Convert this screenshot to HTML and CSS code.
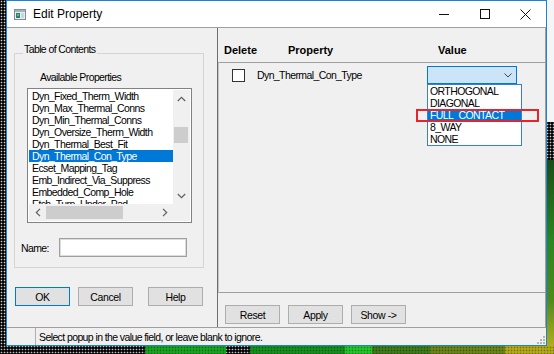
FILE: index.html
```html
<!DOCTYPE html>
<html lang="en">
  <head>
    <meta charset="UTF-8" />
    <title>Edit Property</title>
    <link rel="stylesheet" href="styles.css">
  </head>
  <body>
    <div class="screen">
      <div class="window">
        <div class="titlebar">
          <svg class="app-icon" width="12" height="11" viewBox="0 0 12 11">
            <rect x="0.5" y="0.5" width="11" height="10" fill="#e9eef2" stroke="#7d8c99" />
            <rect x="1" y="1" width="10" height="2" fill="#9fb3c4" />
            <rect x="2" y="4" width="4" height="5" fill="#2f7f6c" />
            <rect x="3" y="5" width="2" height="2" fill="#5fc05a" />
            <rect x="7" y="4" width="3" height="5" fill="#c7d6e2" />
          </svg>
          <span class="title">Edit Property</span>
          <div class="caption-buttons">
            <span class="cap-btn">
              <svg width="10" height="1" viewBox="0 0 10 1"><rect width="10" height="1" fill="#111" /></svg>
            </span>
            <span class="cap-btn">
              <svg width="10" height="10" viewBox="0 0 10 10"><rect x="0.5" y="0.5" width="9" height="9" fill="none" stroke="#111" /></svg>
            </span>
            <span class="cap-btn">
              <svg width="11" height="11" viewBox="0 0 11 11"><path d="M0.5 0.5L10.5 10.5M10.5 0.5L0.5 10.5" stroke="#111" stroke-width="1" /></svg>
            </span>
          </div>
        </div>

        <div class="main">
          <div class="left-pane">
            <div class="group">
              <div class="group-title">Table of Contents</div>
              <div class="avail-label">Available Properties</div>
              <div class="listbox">
                <ul class="list-items">
                  <li>Dyn_Fixed_Therm_Width</li>
                  <li>Dyn_Max_Thermal_Conns</li>
                  <li>Dyn_Min_Thermal_Conns</li>
                  <li>Dyn_Oversize_Therm_Width</li>
                  <li>Dyn_Thermal_Best_Fit</li>
                  <li class="selected">Dyn_Thermal_Con_Type</li>
                  <li>Ecset_Mapping_Tag</li>
                  <li>Emb_Indirect_Via_Suppress</li>
                  <li>Embedded_Comp_Hole</li>
                  <li>Etch_Turn_Under_Pad</li>
                </ul>
                <div class="vscroll">
                  <span class="sb-btn">
                    <svg width="9" height="6" viewBox="0 0 9 6"><polyline points="0.8,5 4.5,1.3 8.2,5" fill="none" stroke="#606060" stroke-width="1.2" /></svg>
                  </span>
                  <div class="sb-track"><div class="v-thumb"></div></div>
                  <span class="sb-btn">
                    <svg width="9" height="6" viewBox="0 0 9 6"><polyline points="0.8,1 4.5,4.7 8.2,1" fill="none" stroke="#606060" stroke-width="1.2" /></svg>
                  </span>
                </div>
                <div class="hscroll">
                  <span class="sb-btn">
                    <svg width="6" height="9" viewBox="0 0 6 9"><polyline points="5,0.8 1.3,4.5 5,8.2" fill="none" stroke="#606060" stroke-width="1.2" /></svg>
                  </span>
                  <div class="sb-track"><div class="h-thumb"></div></div>
                  <span class="sb-btn">
                    <svg width="6" height="9" viewBox="0 0 6 9"><polyline points="1,0.8 4.7,4.5 1,8.2" fill="none" stroke="#606060" stroke-width="1.2" /></svg>
                  </span>
                </div>
                <div class="corner"></div>
              </div>
              <div class="name-row">
                <label class="name-label" for="name">Name:</label>
                <input class="name-input" id="name" type="text" />
              </div>
            </div>
            <div class="left-buttons">
              <button class="btn default">OK</button>
              <button class="btn">Cancel</button>
              <button class="btn help">Help</button>
            </div>
          </div>

          <div class="right-pane">
            <div class="prop-header">
              <span class="col-delete">Delete</span>
              <span class="col-property">Property</span>
              <span>Value</span>
            </div>
            <div class="prop-box">
              <div class="prop-row">
                <span class="checkbox"></span>
                <span class="prop-name">Dyn_Thermal_Con_Type</span>
                <div class="combo">
                  <svg class="combo-arrow" width="8" height="5" viewBox="0 0 8 5"><polyline points="0.5,0.5 4,4 7.5,0.5" fill="none" stroke="#444" stroke-width="1" /></svg>
                  <ul class="dropdown">
                    <li>ORTHOGONAL</li>
                    <li>DIAGONAL</li>
                    <li class="selected">FULL_CONTACT</li>
                    <li>8_WAY</li>
                    <li>NONE</li>
                  </ul>
                  <span class="callout"></span>
                </div>
              </div>
            </div>
            <div class="right-buttons">
              <button class="btn">Reset</button>
              <button class="btn">Apply</button>
              <button class="btn">Show -&gt;</button>
            </div>
          </div>
        </div>

        <div class="statusbar">
          <span class="status-cell"></span>
          <span class="status-text">Select popup in the value field, or leave blank to ignore.</span>
          <svg class="grip" width="8" height="8" viewBox="0 0 8 8">
            <rect x="6" y="0" width="2" height="2" fill="#b4b4b4" />
            <rect x="3" y="3" width="2" height="2" fill="#b4b4b4" />
            <rect x="6" y="3" width="2" height="2" fill="#b4b4b4" />
            <rect x="0" y="6" width="2" height="2" fill="#b4b4b4" />
            <rect x="3" y="6" width="2" height="2" fill="#b4b4b4" />
            <rect x="6" y="6" width="2" height="2" fill="#b4b4b4" />
          </svg>
        </div>
      </div>
      <div class="right-strip"></div>
    </div>
    <div class="bottom-strip"></div>
  </body>
</html>
```

FILE: styles.css
```css
* {
  box-sizing: border-box;
}

body {
  margin: 0;
  width: 554px;
  height: 354px;
  overflow: hidden;
  background-color: #050505;
  background-image: radial-gradient(circle, #d0d0d0 0.7px, transparent 1.1px);
  background-size: 3px 3px;
  font-family: "Liberation Sans", Arial, sans-serif;
  font-size: 10.5px;
  letter-spacing: -0.6px;
  color: #000;
}

.screen {
  display: flex;
  height: 346px;
  padding-left: 6px;
}

.window {
  width: 541px;
  height: 346px;
  border: 1px solid #1883d7;
  background: #f0f0f0;
  display: flex;
  flex-direction: column;
}

/* title bar */
.titlebar {
  height: 27px;
  flex: none;
  display: flex;
  align-items: center;
  padding-left: 7px;
  background: #fff;
  border-bottom: 1px solid #a0a0a0;
}

.app-icon {
  margin-right: 7px;
}

.title {
  font-size: 12px;
  letter-spacing: 0;
}

.caption-buttons {
  display: flex;
  margin-left: auto;
  height: 100%;
}

.cap-btn {
  width: 41px;
  display: flex;
  align-items: center;
  justify-content: center;
}

/* main area */
.main {
  flex: 1;
  display: flex;
}

.left-pane {
  width: 211px;
  padding: 25px 0 0 7px;
  border-right: 1px solid #6d6d6d;
}

.group {
  width: 190px;
  border: 1px solid #d5d5d5;
  padding-bottom: 10px;
}

.group-title {
  width: max-content;
  margin: -11px 0 0 8px;
  padding: 0 1px;
  line-height: 13px;
  background: #f0f0f0;
}

.avail-label {
  margin-top: 15px;
  padding-left: 25px;
  line-height: 13px;
}

.listbox {
  width: 165px;
  height: 135px;
  margin: 4px 0 0 12px;
  padding: 1px;
  border: 1px solid #828282;
  background: #fff;
  display: grid;
  grid-template-columns: 1fr 17px;
  grid-template-rows: 1fr 17px;
}

.list-items {
  margin: 0;
  padding: 0;
  list-style: none;
  overflow: hidden;
}

.list-items li {
  height: 12px;
  line-height: 12px;
  padding-left: 3px;
  white-space: nowrap;
}

.list-items li.selected {
  background: #0078d7;
  color: #fff;
}

.vscroll,
.hscroll,
.corner {
  background: #f0f0f0;
}

.vscroll {
  display: flex;
  flex-direction: column;
}

.hscroll {
  display: flex;
}

.sb-btn {
  width: 17px;
  height: 17px;
  flex: none;
  display: flex;
  align-items: center;
  justify-content: center;
}

.sb-track {
  flex: 1;
}

.v-thumb {
  height: 16px;
  margin: 20px 2px 0 1px;
  background: #cdcdcd;
}

.h-thumb {
  width: 77px;
  height: 13px;
  margin-top: 2px;
  background: #cdcdcd;
}

.name-row {
  display: flex;
  align-items: center;
  margin-top: 15px;
  padding-left: 6px;
}

.name-label {
  width: 38px;
}

.name-input {
  width: 128px;
  height: 19px;
  margin: 0;
  border: 1px solid #a0a0a0;
  box-shadow: inset 0 0 0 1px #dcdcdc;
  background: #fff;
}

.btn {
  width: 55px;
  height: 19px;
  padding: 0;
  border: 1px solid #adadad;
  background: #e1e1e1;
  font-family: inherit;
  font-size: 10.5px;
  letter-spacing: -0.4px;
  color: #000;
}

.btn.default {
  border-color: #0078d7;
}

.left-buttons {
  display: flex;
  gap: 8px;
  margin: 19px 0 0 1px;
}

.left-buttons .help {
  margin-left: 7px;
}

/* right side */
.right-pane {
  width: 328px;
  display: flex;
  flex-direction: column;
  border-right: 1px solid #a0a0a0;
}

.prop-header {
  height: 34px;
  flex: none;
  display: flex;
  padding: 16px 0 0 6px;
  line-height: 13px;
  font-size: 11px;
  font-weight: bold;
  letter-spacing: 0;
}

.col-delete {
  width: 64px;
}

.col-property {
  width: 150px;
}

.prop-box {
  height: 231px;
  flex: none;
  border-top: 1px solid #a0a0a0;
  border-bottom: 1px solid #a0a0a0;
  border-left: 1px solid #c4c4c4;
}

.prop-row {
  display: flex;
  align-items: center;
  height: 18px;
  margin-top: 3px;
  padding-left: 13px;
}

.checkbox {
  width: 13px;
  height: 13px;
  margin-right: 12px;
  border: 1px solid #333;
  background: #fff;
}

.prop-name {
  width: 170px;
}

.combo {
  position: relative;
  width: 90px;
  height: 18px;
  display: flex;
  align-items: center;
  border: 1px solid #0078d7;
  background: #cce4f7;
}

.combo-arrow {
  margin: 0 4px 0 auto;
}

.dropdown {
  position: absolute;
  top: 17px;
  left: -1px;
  width: 95px;
  margin: 0;
  padding: 0;
  list-style: none;
  border: 1px solid #3a7fd0;
  background: #fff;
  z-index: 2;
}

.dropdown li {
  height: 12px;
  line-height: 12px;
  padding-left: 2px;
}

.dropdown li.selected {
  background: #0078d7;
  color: #fff;
}

.callout {
  position: absolute;
  top: 42px;
  left: -12px;
  width: 123px;
  height: 13px;
  border: 2px solid #e8232b;
  z-index: 3;
}

.right-buttons {
  display: flex;
  gap: 8px;
  margin-top: 12px;
  padding-left: 7px;
}

/* status bar */
.statusbar {
  height: 18px;
  flex: none;
  display: flex;
  align-items: center;
  border-top: 1px solid #a0a0a0;
}

.status-cell {
  width: 29px;
  height: 100%;
  border-right: 1px solid #b0b0b0;
}

.status-text {
  padding-left: 3px;
}

.grip {
  margin: auto 1px 1px auto;
}

/* desktop behind the window */
.right-strip {
  flex: 1;
  background: linear-gradient(to bottom, #f5f5f5 0 122px, transparent 122px 160px, #1d4d18 160px, #2b8522 240px, #4f8a1d 300px, #b2ad1a 346px);
}

.bottom-strip {
  height: 8px;
  background-image:
    radial-gradient(circle, rgba(0, 0, 0, 0.35) 0.7px, transparent 1.1px),
    linear-gradient(to right, transparent 0 145px, #1aa322 145px 226px, transparent 226px 250px, #168f1e 250px 345px, #25c42c 345px 372px, #3d7a1a 372px 430px, #6a8418 430px 505px, #b3a816 505px);
  background-size: 3px 3px, auto;
}
```
